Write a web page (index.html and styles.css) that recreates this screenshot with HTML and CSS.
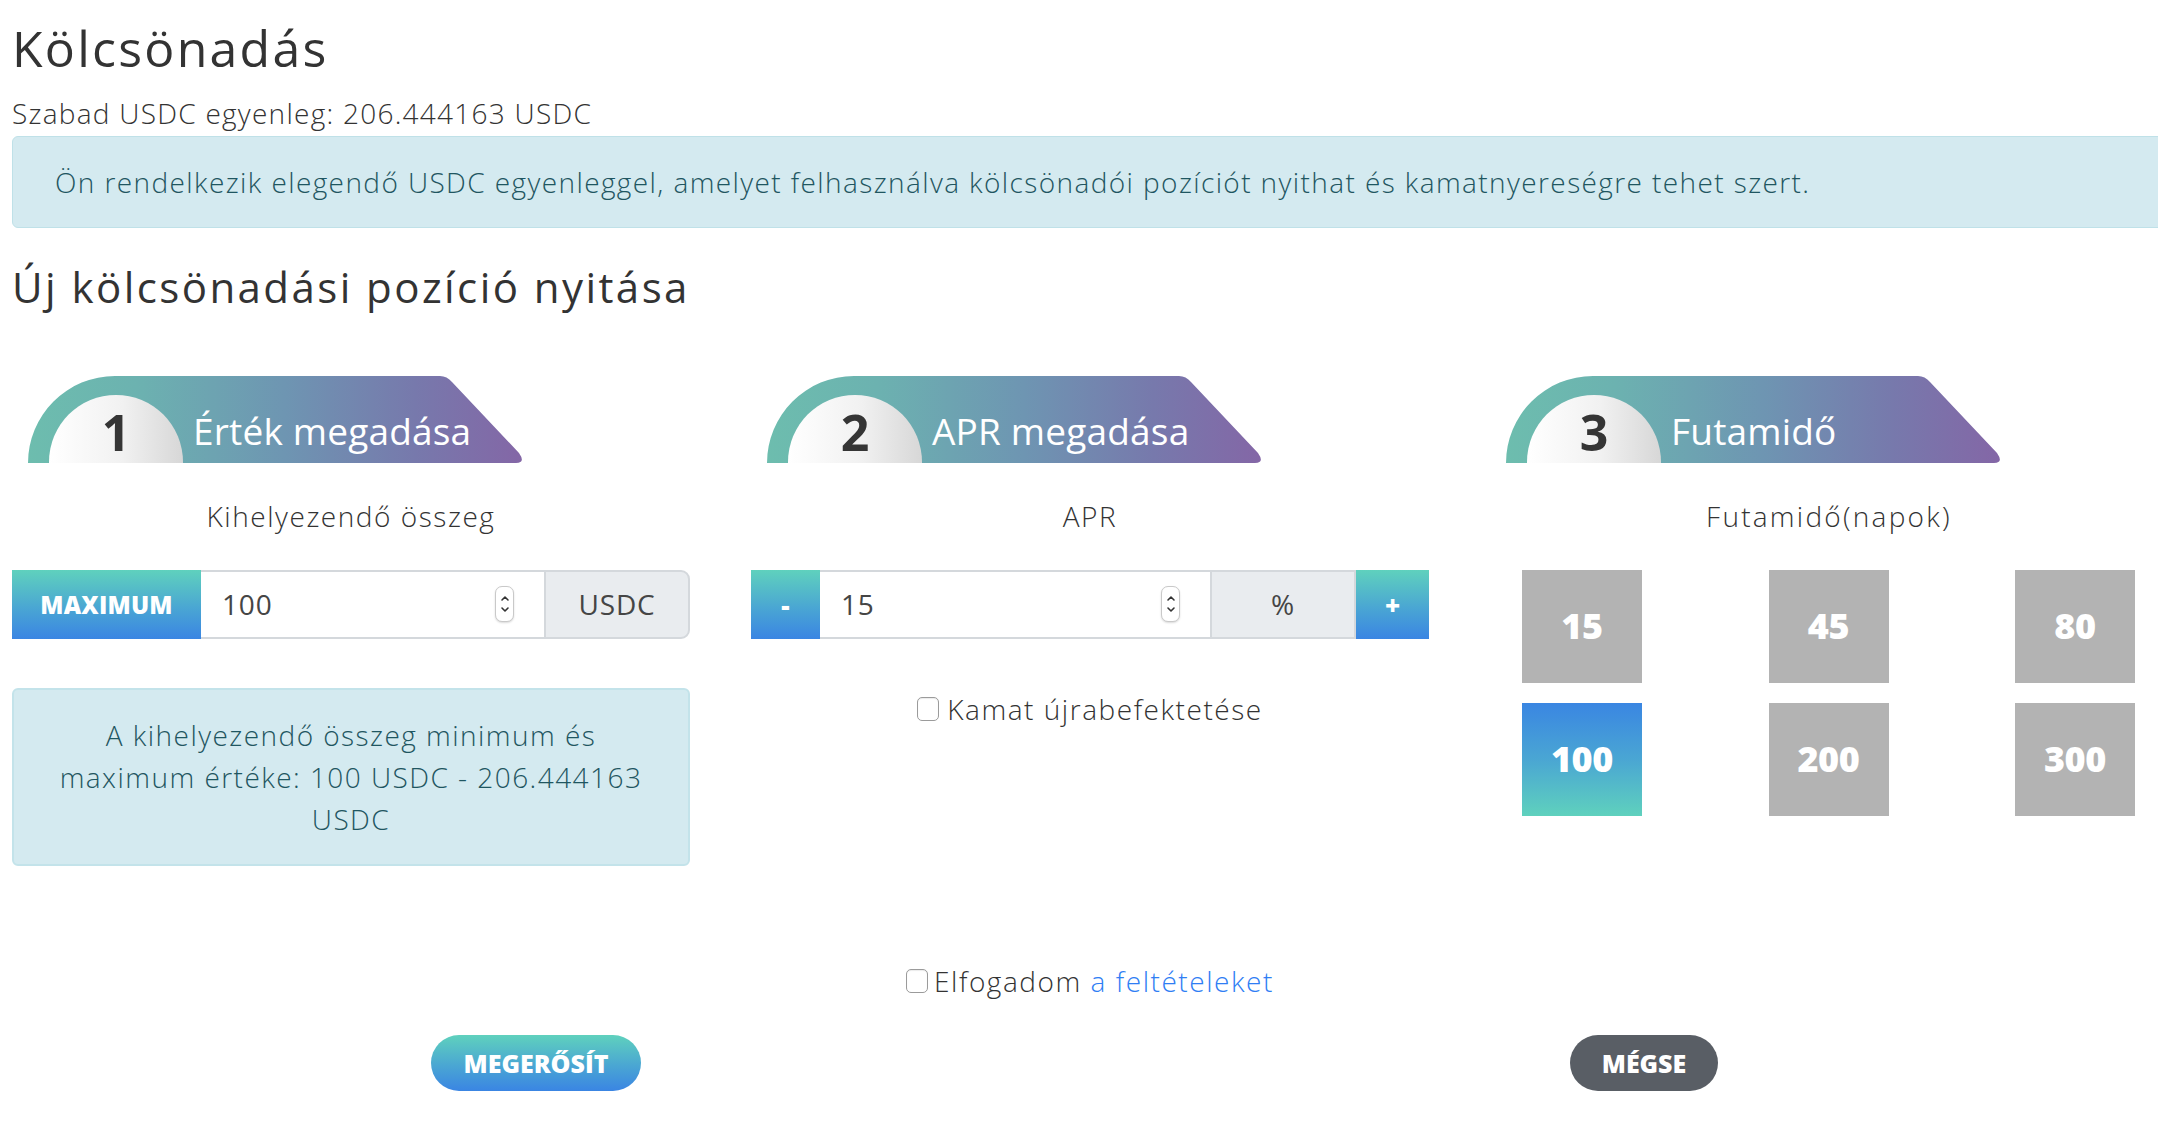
FILE: index.html
```html
<!DOCTYPE html>
<html lang="hu">
<head>
<meta charset="utf-8">
<title>Kölcsönadás</title>
<link rel="stylesheet" href="styles.css">
</head>
<body>
<div class="page">
  <h1 class="title">Kölcsönadás</h1>
  <p class="balance">Szabad USDC egyenleg: 206.444163 USDC</p>
  <div class="alert">Ön rendelkezik elegendő USDC egyenleggel, amelyet felhasználva kölcsönadói pozíciót nyithat és kamatnyereségre tehet szert.</div>
  <h2 class="subtitle">Új kölcsönadási pozíció nyitása</h2>

  <div class="cols">
    <section class="col">
      <div class="step">
        <div class="disc">1</div>
        <div class="step-title">Érték megadása</div>
      </div>
      <div class="label">Kihelyezendő összeg</div>
      <div class="input-group rounded">
        <button class="grad-btn max-btn">MAXIMUM</button>
        <div class="field"><span class="value">100</span><span class="spinner"><svg width="12" height="28" viewBox="0 0 12 28"><path d="M3 10 L6 7 L9 10" fill="none" stroke="#333" stroke-width="1.6" stroke-linecap="round" stroke-linejoin="round"/><path d="M3 18 L6 21 L9 18" fill="none" stroke="#333" stroke-width="1.6" stroke-linecap="round" stroke-linejoin="round"/></svg></span></div>
        <div class="addon addon-end">USDC</div>
      </div>
      <div class="info">A kihelyezendő összeg minimum és maximum értéke: 100 USDC - 206.444163 USDC</div>
    </section>

    <section class="col">
      <div class="step">
        <div class="disc">2</div>
        <div class="step-title">APR megadása</div>
      </div>
      <div class="label">APR</div>
      <div class="input-group">
        <button class="grad-btn pm-btn minus">-</button>
        <div class="field"><span class="value">15</span><span class="spinner"><svg width="12" height="28" viewBox="0 0 12 28"><path d="M3 10 L6 7 L9 10" fill="none" stroke="#333" stroke-width="1.6" stroke-linecap="round" stroke-linejoin="round"/><path d="M3 18 L6 21 L9 18" fill="none" stroke="#333" stroke-width="1.6" stroke-linecap="round" stroke-linejoin="round"/></svg></span></div>
        <div class="addon">%</div>
        <button class="grad-btn pm-btn plus">+</button>
      </div>
      <label class="check check-kamat"><span class="box"></span>Kamat újrabefektetése</label>
    </section>

    <section class="col">
      <div class="step">
        <div class="disc">3</div>
        <div class="step-title">Futamidő</div>
      </div>
      <div class="label label-wide">Futamidő(napok)</div>
      <div class="days">
        <button class="day">15</button>
        <button class="day">45</button>
        <button class="day">80</button>
        <button class="day active">100</button>
        <button class="day">200</button>
        <button class="day">300</button>
      </div>
    </section>
  </div>

  <div class="terms"><label class="check"><span class="box"></span>Elfogadom&nbsp;<a href="#">a feltételeket</a></label></div>

  <div class="actions">
    <div class="action-cell left"><button class="pill confirm">MEGERŐSÍT</button></div>
    <div class="action-cell right"><button class="pill cancel">MÉGSE</button></div>
  </div>
</div>
</body>
</html>
```

FILE: styles.css
```css
html, body {
  margin: 0;
  padding: 0;
  overflow: hidden;
  background: #fff;
}
body {
  font-family: "Open Sans", "Noto Sans", sans-serif;
  font-weight: 300;
  font-size: 28px;
  line-height: 34px;
  color: #333;
  letter-spacing: 0.055em;
}
.page {
  width: 2156px;
  padding-left: 12px;
}
.title {
  margin: 0;
  padding-top: 18px;
  font-size: 50px;
  line-height: 60px;
  font-weight: 400;
  letter-spacing: 0.045em;
  color: #333;
}
.balance {
  margin: 18px 0 0 0;
  letter-spacing: 0.045em;
}
.alert {
  margin-top: 6px;
  width: 2200px;
  box-sizing: border-box;
  padding: 28px 42px;
  background: #d4eaf0;
  border: 1px solid #bfe1e8;
  border-radius: 6px;
  color: #1f5661;
  letter-spacing: 0.05em;
}
.subtitle {
  margin: 34px 0 0 0;
  font-size: 42px;
  line-height: 50px;
  font-weight: 400;
  letter-spacing: 0.058em;
  color: #333;
}
.cols {
  display: grid;
  grid-template-columns: 678px 678px 678px;
  column-gap: 61px;
  margin-top: 63px;
}
.col {
  display: flex;
  flex-direction: column;
}
.step {
  display: flex;
  align-items: flex-start;
  width: 496px;
  height: 88px;
  margin-left: 16px;
  background: linear-gradient(90deg, #6dbdae 0%, #6cb2b0 22%, #6e95b2 52%, #7779ac 78%, #8466a6 100%);
  clip-path: path('M0,88 A87,87 0 0 1 87,1 L412,1 Q419,1 424,7 L491,78 Q498,88 488,88 Z');
}
.disc {
  width: 134px;
  height: 68px;
  margin: 20px 0 0 21px;
  border-radius: 67px 67px 0 0;
  background: linear-gradient(90deg, #ffffff 0%, #f1f1f1 55%, #d7d7d7 100%);
  text-align: center;
  font-weight: 700;
  font-size: 50px;
  line-height: 68px;
  padding-top: 3px;
  box-sizing: border-box;
  color: #353535;
  letter-spacing: 0;
  font-family: "Open Sans", sans-serif;
}
.step-title {
  margin: 31px 0 0 10px;
  font-size: 37px;
  line-height: 50px;
  font-weight: 400;
  color: #fff;
  letter-spacing: 0.005em;
}
.label {
  margin-top: 36px;
  text-align: center;
}
.label-wide {
  letter-spacing: 0.08em;
}
.input-group {
  display: flex;
  height: 69px;
  margin-top: 37px;
}
.grad-btn {
  border: 0;
  margin: 0;
  padding: 0;
  background: linear-gradient(180deg, #5fd1bd 0%, #4aa6d3 55%, #3a85e3 100%);
  color: #fff;
  font-family: "Open Sans", sans-serif;
  font-weight: 800;
  cursor: pointer;
}
.max-btn {
  width: 189px;
  font-size: 24px;
  letter-spacing: 0.01em;
}
.pm-btn {
  font-size: 26px;
}
.minus { width: 69px; }
.plus { width: 73px; }
.field {
  flex: 1;
  display: flex;
  align-items: center;
  justify-content: space-between;
  border-top: 2px solid #d4d8dc;
  border-bottom: 2px solid #d4d8dc;
  background: #fff;
  padding: 0 30px 2px 21px;
  color: #454545;
  font-weight: 400;
  letter-spacing: 0.03em;
}
.spinner {
  display: flex;
  align-items: center;
  justify-content: center;
  width: 17px;
  height: 34px;
  border: 1px solid #c9c9c9;
  border-radius: 7px;
  box-shadow: 0 1px 2px rgba(0,0,0,0.15);
  background: #fff;
}
.addon {
  width: 146px;
  display: flex;
  align-items: center;
  justify-content: center;
  box-sizing: border-box;
  padding-bottom: 2px;
  background: #e9ecef;
  border: 2px solid #d4d8dc;
  color: #454545;
  font-weight: 400;
  letter-spacing: 0.03em;
}
.addon-end {
  border-radius: 0 9px 9px 0;
}
.info {
  margin-top: 49px;
  padding: 24px 40px;
  background: #d4eaf0;
  border: 2px solid #c3e3ea;
  border-radius: 6px;
  color: #1f5661;
  text-align: center;
  line-height: 42px;
  letter-spacing: 0.052em;
}
.check {
  display: flex;
  align-items: center;
  justify-content: center;
  font-weight: 300;
}
.check-kamat {
  margin-top: 53px;
}
.check-kamat .box {
  margin-right: 8px;
}
.box {
  width: 20px;
  height: 22px;
  border: 1.5px solid #9b9b9b;
  border-radius: 5px;
  background: #fff;
  margin-right: 6px;
  box-shadow: inset 0 1px 1px rgba(0,0,0,0.08);
}
.check a {
  color: #2f7ef4;
  text-decoration: none;
}
.days {
  display: grid;
  grid-template-columns: 120px 120px 120px;
  justify-content: space-between;
  row-gap: 20px;
  padding: 0 33px 0 32px;
  margin-top: 37px;
}
.day {
  width: 120px;
  height: 113px;
  border: 0;
  padding: 0 0 2px 0;
  background: #b3b3b3;
  color: #fff;
  font-family: "Open Sans", sans-serif;
  font-weight: 800;
  font-size: 36px;
  letter-spacing: -0.01em;
}
.day.active {
  background: linear-gradient(180deg, #3a86e2 0%, #4aa6d3 50%, #5fd1bd 100%);
}
.terms {
  margin-top: 98px;
  width: 2156px;
}
.actions {
  display: grid;
  grid-template-columns: 1fr 1fr;
  width: 2156px;
  margin-top: 37px;
}
.action-cell {
  display: flex;
  justify-content: center;
}
.action-cell.left { padding-right: 30px; }
.action-cell.right { padding-left: 30px; }
.pill {
  height: 56px;
  border: 0;
  border-radius: 28px;
  color: #fff;
  font-family: "Open Sans", sans-serif;
  font-weight: 800;
  font-size: 25px;
  letter-spacing: 0;
  padding-bottom: 2px;
  cursor: pointer;
}
.confirm {
  width: 210px;
  background: linear-gradient(180deg, #5fd1bd 0%, #4aa6d3 55%, #3a85e3 100%);
}
.cancel {
  width: 148px;
  background: #595e65;
}
```
